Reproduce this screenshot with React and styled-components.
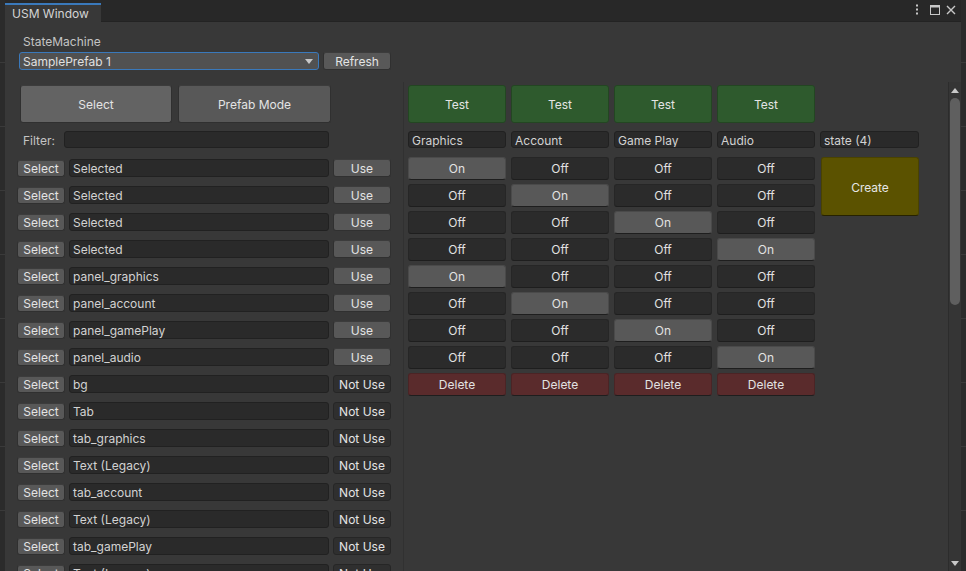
import React from "react";
import styled, { createGlobalStyle } from "styled-components";

const Global = createGlobalStyle`
  html, body { margin: 0; padding: 0; }
  body {
    width: 966px; height: 571px; overflow: hidden;
    background-color: #2b2b2b;
    background-image: repeating-linear-gradient(to bottom, transparent 0 62px, #3a3a3a 62px 63px, transparent 63px 64px);
    font-family: Inter, "Noto Sans", "Liberation Sans", sans-serif;
    font-size: 12px;
    color: #d2d2d2;
  }
  * { box-sizing: border-box; }
`;

const Window = styled.div`
  margin-left: 5px;
  width: 956px;
  height: 571px;
  background: #383838;
  display: flex;
  flex-direction: column;
  overflow: hidden;
`;

const TitleBar = styled.div`
  height: 22px;
  flex: none;
  background: #282828;
  border-bottom: 1px solid #232323;
  display: flex;
  align-items: flex-end;
  justify-content: space-between;
`;

const Tab = styled.div`
  width: 96px;
  height: 19px;
  background: #383838;
  border-top: 2px solid #3a79bb;
  margin-bottom: -1px;
  padding-left: 7px;
  line-height: 17px;
  color: #d4d4d4;
  font-size: 12px;
`;

const TitleIcons = styled.div`
  display: flex;
  align-items: center;
  gap: 4px;
  height: 22px;
  padding-right: 4px;
  color: #c8c8c8;
`;

const IconGap = styled.span`
  width: ${p => p.$w}px;
`;

const Header = styled.div`
  flex: none;
  height: 60px;
  padding: 13px 0 0 14px;
`;

const Label = styled.div`
  padding-left: 4px;
  height: 14px;
  line-height: 14px;
  color: #c4c4c4;
`;

const DropRow = styled.div`
  display: flex;
  gap: 4px;
  margin-top: 3px;
`;

const Dropdown = styled.div`
  width: 300px;
  height: 18px;
  background: #515151;
  border: 1px solid #3a79bb;
  border-radius: 3px;
  display: flex;
  align-items: center;
  justify-content: space-between;
  padding: 1px 4px 0 3px;
  color: #e0e0e0;
`;

const Caret = styled.span`
  width: 0; height: 0;
  border-left: 4px solid transparent;
  border-right: 4px solid transparent;
  border-top: 5px solid #c8c8c8;
  margin-right: 1px;
  margin-top: -1px;
`;

const Button = styled.div`
  display: flex;
  align-items: center;
  justify-content: center;
  background: ${p => p.$bg || "#585858"};
  border: 1px solid ${p => p.$border || "#303030"};
  border-top-color: ${p => p.$border || "#3c3c3c"};
  border-radius: 3px;
  color: #e4e4e4;
  width: ${p => p.$w}px;
  height: ${p => p.$h}px;
  padding-top: 1px;
  flex: none;
  white-space: nowrap;
`;

const ScrollArea = styled.div`
  flex: 1;
  display: flex;
  min-height: 0;
`;

const LeftPane = styled.div`
  width: 398px;
  flex: none;
  padding: 3px 0 0 12px;
  display: flex;
  flex-direction: column;
`;

const BigRow = styled.div`
  display: flex;
  gap: 6px;
  margin-left: 3px;
`;

const FilterRow = styled.div`
  display: flex;
  align-items: center;
  margin-top: 8px;
  height: 17px;
`;

const FilterLabel = styled.div`
  width: 47px;
  padding-left: 6px;
  padding-top: 1px;
  color: #c4c4c4;
`;

const Field = styled.div`
  width: ${p => p.$w}px;
  height: ${p => p.$h || 18}px;
  background: #2a2a2a;
  border: 1px solid #212121;
  border-radius: 3px;
  padding: 1px 0 0 3px;
  line-height: ${p => (p.$h || 18) - 2}px;
  color: #d2d2d2;
  white-space: nowrap;
  overflow: hidden;
  flex: none;
`;

const List = styled.div`
  margin-top: 11px;
  display: flex;
  flex-direction: column;
  gap: 9px;
`;

const Row = styled.div`
  display: flex;
  align-items: center;
  height: 18px;
  gap: 4px;
`;

const RightPane = styled.div`
  flex: 1;
  border-left: 1px solid #313131;
  padding: 3px 0 0 4px;
  display: flex;
  gap: 5px;
  align-items: flex-start;
`;

const Column = styled.div`
  width: 98px;
  display: flex;
  flex-direction: column;
  padding-top: ${p => (p.$offset ? 46 : 0)}px;
`;

const NameField = styled(Field)`
  margin-top: ${p => (p.$first ? 0 : 8)}px;
`;

const Cells = styled.div`
  margin-top: 9px;
  display: flex;
  flex-direction: column;
  gap: 4px;
`;

const Cell = styled.div`
  height: 23px;
  border-radius: 3px;
  display: flex;
  align-items: center;
  justify-content: center;
  color: #e2e2e2;
  background: ${p => p.$bg};
  border: 1px solid ${p => p.$border};
  border-bottom-color: #1e1e1e;
`;

const CreateButton = styled.div`
  margin-top: 9px;
  margin-left: 1px;
  width: 98px;
  height: 59px;
  background: #5b5200;
  border: 1px solid #4a4300;
  border-bottom-color: #262200;
  border-radius: 3px;
  display: flex;
  align-items: center;
  justify-content: center;
  color: #e6e6e6;
  padding-top: 1px;
`;

const Scrollbar = styled.div`
  width: 13px;
  flex: none;
  background: #353535;
  border-left: 1px solid #2c2c2c;
  display: flex;
  flex-direction: column;
  align-items: center;
  padding-top: 6px;
  position: relative;
`;

const ArrowUp = styled.span`
  width: 0; height: 0;
  border-left: 4px solid transparent;
  border-right: 4px solid transparent;
  border-bottom: 5px solid #c8c8c8;
`;

const ArrowDown = styled.span`
  position: absolute;
  bottom: 5px;
  width: 0; height: 0;
  border-left: 4px solid transparent;
  border-right: 4px solid transparent;
  border-top: 5px solid #c8c8c8;
`;

const Thumb = styled.div`
  margin-top: 5px;
  width: 10px;
  height: 207px;
  border-radius: 5px;
  background: #5f5f5f;
`;

const rows = [
  ["Selected", true], ["Selected", true], ["Selected", true], ["Selected", true],
  ["panel_graphics", true], ["panel_account", true], ["panel_gamePlay", true], ["panel_audio", true],
  ["bg", false], ["Tab", false], ["tab_graphics", false], ["Text (Legacy)", false],
  ["tab_account", false], ["Text (Legacy)", false], ["tab_gamePlay", false], ["Text (Legacy)", false],
];

const states = ["Graphics", "Account", "Game Play", "Audio"];
const onMap = [0, 1, 2, 3, 0, 1, 2, 3];

function Kebab() {
  return (
    <svg width="6" height="12" viewBox="0 0 6 12">
      <rect x="2" y="0.5" width="2" height="2" fill="#c8c8c8" />
      <rect x="2" y="4.5" width="2" height="2" fill="#c8c8c8" />
      <rect x="2" y="8.5" width="2" height="2" fill="#c8c8c8" />
    </svg>
  );
}

function Maximize() {
  return (
    <svg width="12" height="12" viewBox="0 0 12 12">
      <rect x="1.5" y="1.5" width="9" height="9" fill="none" stroke="#c8c8c8" strokeWidth="1" />
      <rect x="1" y="1" width="10" height="2.5" fill="#c8c8c8" />
    </svg>
  );
}

function Close() {
  return (
    <svg width="12" height="12" viewBox="0 0 12 12">
      <path d="M2 2 L10 10 M10 2 L2 10" stroke="#c8c8c8" strokeWidth="1.4" />
    </svg>
  );
}

export default function App() {
  return (
    <>
      <Global />
      <Window>
        <TitleBar>
          <Tab>USM Window</Tab>
          <TitleIcons>
            <Kebab />
            <IconGap $w={1} />
            <Maximize />
            <Close />
          </TitleIcons>
        </TitleBar>
        <Header>
          <Label>StateMachine</Label>
          <DropRow>
            <Dropdown>
              <span>SamplePrefab 1</span>
              <Caret />
            </Dropdown>
            <Button $w={68} $h={18}>Refresh</Button>
          </DropRow>
        </Header>
        <ScrollArea>
          <LeftPane>
            <BigRow>
              <Button $w={152} $h={38} $bg="#636363">Select</Button>
              <Button $w={153} $h={38}>Prefab Mode</Button>
            </BigRow>
            <FilterRow>
              <FilterLabel>Filter:</FilterLabel>
              <Field $w={265} $h={17} />
            </FilterRow>
            <List>
              {rows.map(([name, use], i) => (
                <Row key={i}>
                  <Button $w={48} $h={17}>Select</Button>
                  <Field $w={260}>{name}</Field>
                  {use ? (
                    <Button $w={58} $h={18}>Use</Button>
                  ) : (
                    <Button $w={58} $h={18} $bg="#2f2f2f" $border="#262626">Not Use</Button>
                  )}
                </Row>
              ))}
            </List>
          </LeftPane>
          <RightPane>
            {states.map((s, c) => (
              <Column key={s}>
                <Button $w={98} $h={38} $bg="#2e5a2d" $border="#234622">Test</Button>
                <NameField $w={98} $h={17}>{s}</NameField>
                <Cells>
                  {onMap.map((o, r) => (
                    <Cell
                      key={r}
                      $bg={o === c ? "#585858" : "#2b2b2b"}
                      $border={o === c ? "#4a4a4a" : "#262626"}
                    >
                      {o === c ? "On" : "Off"}
                    </Cell>
                  ))}
                  <Cell $bg="#5a2b2c" $border="#4b2425">Delete</Cell>
                </Cells>
              </Column>
            ))}
            <Column $offset>
              <NameField $w={99} $h={17} $first>state (4)</NameField>
              <CreateButton>Create</CreateButton>
            </Column>
          </RightPane>
          <Scrollbar>
            <ArrowUp />
            <Thumb />
            <ArrowDown />
          </Scrollbar>
        </ScrollArea>
      </Window>
    </>
  );
}
